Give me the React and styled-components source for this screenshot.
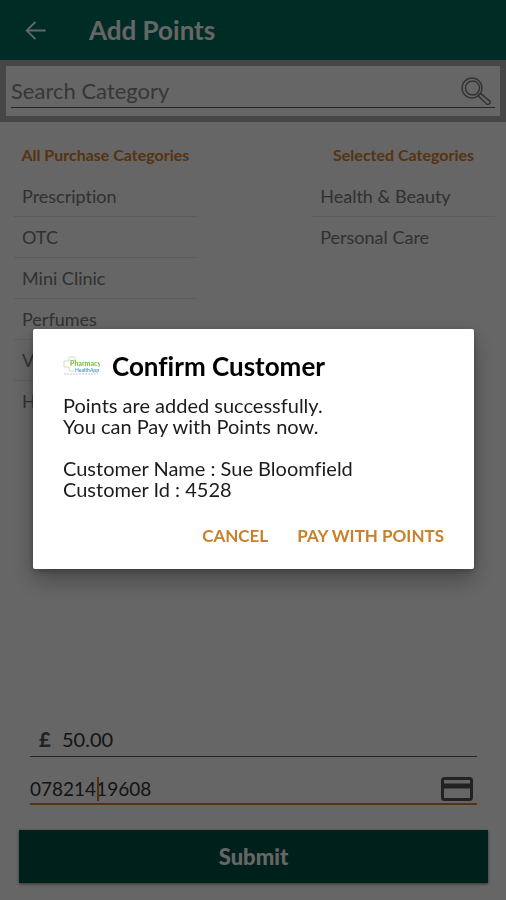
import React, { useState } from "react";
import styled, { createGlobalStyle } from "styled-components";

const GlobalStyle = createGlobalStyle`
	* {
		box-sizing: border-box;
	}

	body {
		margin: 0;
		background: #ffffff;
		font-family: Lato, "Liberation Sans", sans-serif;
		font-variant-ligatures: no-common-ligatures;
	}

	button, input {
		font-family: inherit;
	}
`

const Page = styled.div`
	display: flex;
	flex-direction: column;
	min-height: 100vh;
	padding-bottom: 17px;
`

const Header = styled.header`
	display: flex;
	align-items: center;
	gap: 40px;
	height: 60px;
	padding: 0 22px;
	background: #006e5f;
	color: #ffffff;
`

const IconButton = styled.button`
	display: flex;
	align-items: center;
	justify-content: center;
	flex: none;
	padding: 0;
	border: none;
	background: none;
	color: inherit;
`

const PageTitle = styled.h1`
	margin: 0;
	font-size: 26px;
	font-weight: 700;
	line-height: 30px;
`

const SearchFrame = styled.div`
	padding: 6px;
	background: #b0b0b0;
`

const SearchBox = styled.label`
	display: flex;
	height: 50px;
	padding: 8px 5px;
	background: #ffffff;
`

const SearchLine = styled.div`
	display: flex;
	align-items: center;
	flex: 1;
	padding-right: 4px;
	border-bottom: 1px solid #606060;
	color: #808080;
`

const TextInput = styled.input`
	flex: 1;
	min-width: 0;
	padding: 0;
	border: none;
	outline: none;
	background: none;
	color: #333333;
	font-size: ${props => props.$size ?? '20px'};

	&::placeholder {
		color: #8a8a8a;
		opacity: 1;
	}
`

const Categories = styled.main`
	display: grid;
	grid-template-columns: 38% 38%;
	justify-content: space-between;
	padding: 23px 11px 0 14px;
`

const ColumnTitle = styled.h2`
	margin: 0 0 11px;
	color: #d9802b;
	font-size: 16px;
	font-weight: 700;
	line-height: 20px;
	text-align: center;
	white-space: nowrap;
`

const List = styled.ul`
	margin: 0;
	padding: 0;
	list-style: none;
`

const ListItem = styled.li`
	height: 41px;
	padding: 0 8px;
	border-bottom: 1px solid #e4e4e4;
	color: #7a7a7a;
	font-size: 18px;
	line-height: 40px;
	white-space: nowrap;

	&:last-child {
		border-bottom: none;
	}
`

const Form = styled.form`
	display: flex;
	flex-direction: column;
	margin-top: auto;
	padding: 0 18px 0 19px;
`

const Fields = styled.div`
	display: flex;
	flex-direction: column;
	gap: 12px;
	padding: 0 11px;
`

const Field = styled.label`
	position: relative;
	display: flex;
	align-items: center;
	height: ${props => props.$active ? '36px' : '35px'};
	padding: ${props => props.$inset ? '0 9px' : '5px 4px 0 0'};
	border-bottom: ${props => props.$active ? '2px solid #d9802b' : '1px solid #606060'};
	color: #555555;
`

const Currency = styled.span`
	width: 23px;
	font-size: 20px;
	font-weight: 900;
`

const Caret = styled.span`
	position: absolute;
	top: 8px;
	left: 67px;
	width: 2px;
	height: 24px;
	background: #d9742b;
`

const Submit = styled.button`
	height: 53px;
	margin-top: 25px;
	border: none;
	background: #005044;
	color: #ffffff;
	font-size: 22px;
	font-weight: 900;
	box-shadow: 0 1px 3px rgba(0, 0, 0, 0.5);
`

const Backdrop = styled.div`
	position: fixed;
	inset: 0;
	display: flex;
	align-items: center;
	justify-content: center;
	padding: 0 32px 2px 33px;
	background: rgba(0, 0, 0, 0.6);
`

const Dialog = styled.div`
	flex: 1;
	padding: 23px 30px 18px;
	border-radius: 2px;
	background: #ffffff;
	box-shadow: 0 11px 24px rgba(0, 0, 0, 0.3), 0 2px 6px rgba(0, 0, 0, 0.25);
`

const DialogHeader = styled.div`
	display: flex;
	align-items: center;
	gap: 12px;
	margin-bottom: 15px;
`

const DialogTitle = styled.h2`
	margin: 0;
	font-size: 26px;
	font-weight: 700;
	line-height: 28px;
`

const Message = styled.p`
	margin: 0 0 19px;
	color: #1c1c1c;
	font-size: 20px;
	line-height: 21px;
`

const Actions = styled.div`
	display: flex;
	justify-content: flex-end;
	gap: 29px;
`

const ActionButton = styled.button`
	height: 32px;
	padding: 0;
	border: none;
	background: none;
	color: #c8802b;
	font-size: 17px;
	font-weight: 700;
	white-space: nowrap;
`

const ArrowIcon = () => (
	<svg width="27" height="27" viewBox="0 0 24 24" fill="currentColor" aria-hidden="true">
		<path d="M21 11.2H6.2l6.4-6.2L11.4 3.8 3 12l8.4 8.2 1.2-1.2-6.4-6.2H21z"/>
	</svg>
)

const SearchIcon = () => (
	<svg width="30" height="28" viewBox="0 0 30 28" fill="none" stroke="currentColor" strokeWidth="1.5" aria-hidden="true">
		<circle cx="11" cy="11" r="10"/>
		<circle cx="11.5" cy="11" r="7"/>
		<path d="M17 18.5l2.5-2.2 9 7.5q1.5 1.6 0 3t-3.2 0L17 18.5z"/>
	</svg>
)

const CardIcon = () => (
	<svg width="32" height="24" viewBox="0 0 32 24" fill="none" stroke="currentColor" aria-hidden="true">
		<rect x="1.5" y="1.5" width="29" height="21" rx="2" strokeWidth="3"/>
		<path d="M2 9h28" strokeWidth="5"/>
	</svg>
)

const Logo = () => (
	<svg width="37" height="20" viewBox="0 0 37 20" role="img" aria-label="Pharmacy">
		<path d="M6 1h6v4M6 1v4H1v6h5v4h5" fill="none" stroke="#cfe0c4" strokeWidth="1"/>
		<text x="7" y="10" fill="#7cc242" fontSize="7" fontWeight="900">Pharmacy</text>
		<text x="12" y="16" fill="#4f9fd0" fontSize="5" fontWeight="700">HealthApp</text>
		<path d="M1 18h34" stroke="#c4c8cc" strokeWidth="1" strokeDasharray="2 1"/>
	</svg>
)

const purchase_categories = ["Prescription", "OTC", "Mini Clinic", "Perfumes", "Vitamins", "Home Care"]
const selected_categories = ["Health & Beauty", "Personal Care"]

const CategoryColumn = ({title, items}) => (
	<section>
		<ColumnTitle>{title}</ColumnTitle>
		<List>
			{items.map(item => <ListItem key={item}>{item}</ListItem>)}
		</List>
	</section>
)

const App = () => {
	const [search, setSearch] = useState("")
	const [amount, setAmount] = useState("50.00")
	const [phone, setPhone] = useState("07821419608")
	const [open, setOpen] = useState(true)

	return (
		<>
			<GlobalStyle/>
			<Page>
				<Header>
					<IconButton aria-label="Back"><ArrowIcon/></IconButton>
					<PageTitle>Add Points</PageTitle>
				</Header>
				<SearchFrame>
					<SearchBox>
						<SearchLine>
							<TextInput
								$size="22px"
								aria-label="Search Category"
								placeholder="Search Category"
								value={search}
								onChange={e => setSearch(e.target.value)}
							/>
							<SearchIcon/>
						</SearchLine>
					</SearchBox>
				</SearchFrame>
				<Categories>
					<CategoryColumn title="All Purchase Categories" items={purchase_categories}/>
					<CategoryColumn title="Selected Categories" items={selected_categories}/>
				</Categories>
				<Form onSubmit={e => e.preventDefault()}>
					<Fields>
						<Field $inset>
							<Currency>£</Currency>
							<TextInput aria-label="Amount" value={amount} onChange={e => setAmount(e.target.value)}/>
						</Field>
						<Field $active>
							<TextInput
								$size="19px"
								aria-label="Phone number"
								value={phone}
								onChange={e => setPhone(e.target.value)}
							/>
							<Caret/>
							<CardIcon/>
						</Field>
					</Fields>
					<Submit type="submit">Submit</Submit>
				</Form>
			</Page>
			{open && (
				<Backdrop>
					<Dialog role="dialog" aria-modal="true" aria-labelledby="dialog-title">
						<DialogHeader>
							<Logo/>
							<DialogTitle id="dialog-title">Confirm Customer</DialogTitle>
						</DialogHeader>
						<Message>
							Points are added successfully.<br/>
							You can Pay with Points now.<br/>
							<br/>
							Customer Name : Sue Bloomfield<br/>
							Customer Id : 4528
						</Message>
						<Actions>
							<ActionButton onClick={() => setOpen(false)}>CANCEL</ActionButton>
							<ActionButton onClick={() => setOpen(false)}>PAY WITH POINTS</ActionButton>
						</Actions>
					</Dialog>
				</Backdrop>
			)}
		</>
	)
}

export default App
